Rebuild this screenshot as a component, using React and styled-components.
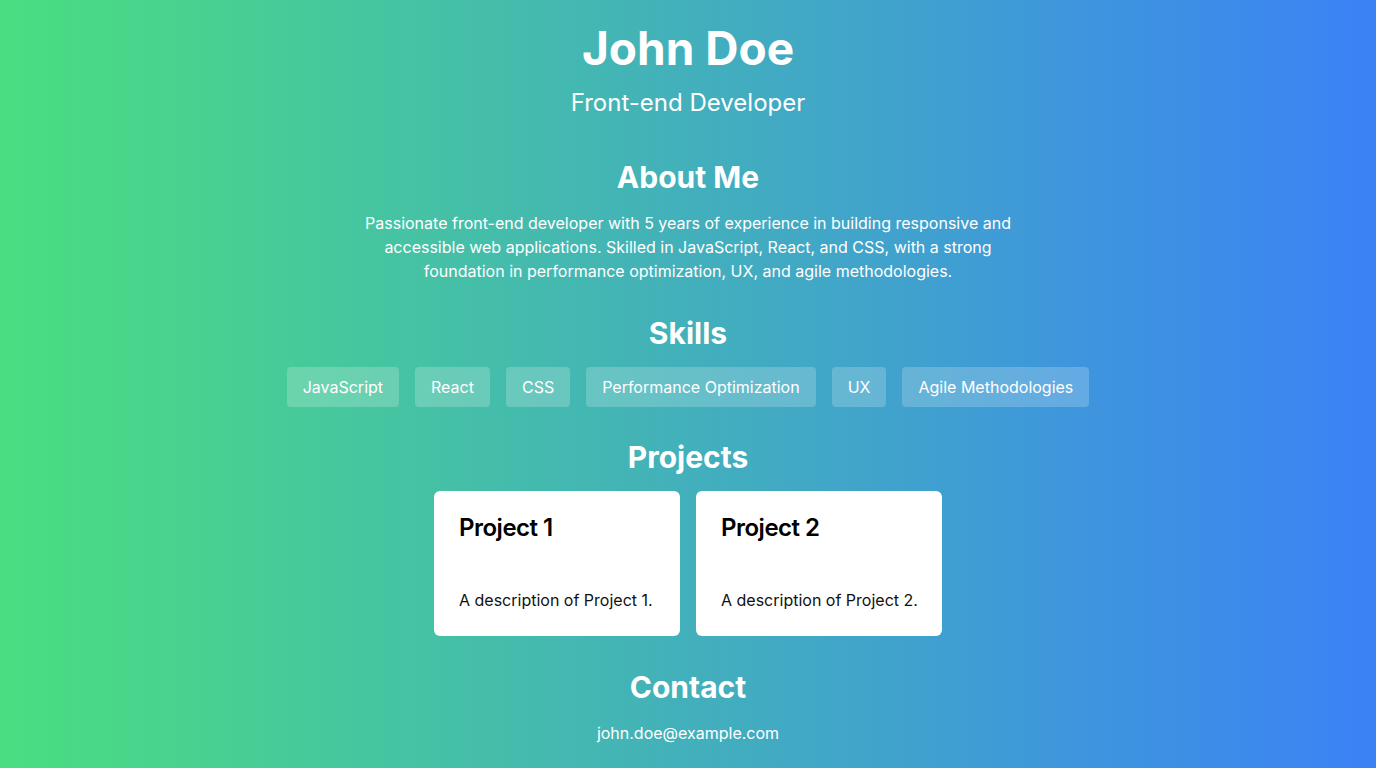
import React from 'react';
import styled, { createGlobalStyle } from 'styled-components';

const GlobalStyle = createGlobalStyle`
  * { box-sizing: border-box; }
  html, body { margin: 0; padding: 0; }
  body {
    font-family: Inter, "Noto Sans", sans-serif;
    background: linear-gradient(to right, #4ade80, #3b82f6);
    min-height: 100vh;
  }
`;

const Page = styled.div`
  min-height: 100vh;
  background: linear-gradient(to right, #4ade80, #3b82f6);
  color: #fff;
  display: flex;
  flex-direction: column;
  align-items: center;
  padding: 20px 32px 24px;
  text-align: center;
`;

const Name = styled.h1`
  margin: 0;
  font-size: 46px;
  line-height: 56px;
  font-weight: 700;
`;

const Role = styled.p`
  margin: 11px 0 0;
  font-size: 24px;
  line-height: 32px;
  font-weight: 400;
`;

const Section = styled.section`
  margin-top: ${p => p.$gap || 32}px;
  display: flex;
  flex-direction: column;
  align-items: center;
`;

const Heading = styled.h2`
  margin: 0 0 16px;
  font-size: 30px;
  line-height: 36px;
  font-weight: 700;
`;

const About = styled.p`
  margin: 0;
  max-width: 672px;
  font-size: 16px;
  line-height: 24px;
`;

const Tags = styled.div`
  display: flex;
  gap: 16px;
  justify-content: center;
`;

const Tag = styled.span`
  height: 40px;
  padding: 0 16px;
  display: inline-flex;
  align-items: center;
  background: rgba(255, 255, 255, 0.2);
  border-radius: 4px;
  font-size: 16px;
`;

const Cards = styled.div`
  display: flex;
  gap: 16px;
`;

const Card = styled.div`
  width: 246px;
  height: 145px;
  background: #fff;
  color: #000;
  border-radius: 6px;
  padding: 21px 24px 24px 25px;
  text-align: left;
`;

const CardTitle = styled.h3`
  margin: 0 0 44px;
  font-size: 24px;
  line-height: 32px;
  font-weight: 600;
  letter-spacing: -0.5px;
`;

const CardText = styled.p`
  margin: 0;
  font-size: 16px;
  line-height: 24px;
  color: #111;
`;

const Email = styled.a`
  color: #fff;
  text-decoration: none;
  font-size: 16px;
  line-height: 24px;
`;

const skills = ['JavaScript', 'React', 'CSS', 'Performance Optimization', 'UX', 'Agile Methodologies'];

export default function App() {
  return (
    <>
      <GlobalStyle />
      <Page>
        <Name>John Doe</Name>
        <Role>Front-end Developer</Role>

        <Section $gap={40}>
          <Heading>About Me</Heading>
          <About>
            Passionate front-end developer with 5 years of experience in building responsive and
            accessible web applications. Skilled in JavaScript, React, and CSS, with a strong
            foundation in performance optimization, UX, and agile methodologies.
          </About>
        </Section>

        <Section>
          <Heading>Skills</Heading>
          <Tags>
            {skills.map(s => <Tag key={s}>{s}</Tag>)}
          </Tags>
        </Section>

        <Section>
          <Heading>Projects</Heading>
          <Cards>
            <Card>
              <CardTitle>Project 1</CardTitle>
              <CardText>A description of Project 1.</CardText>
            </Card>
            <Card>
              <CardTitle>Project 2</CardTitle>
              <CardText>A description of Project 2.</CardText>
            </Card>
          </Cards>
        </Section>

        <Section $gap={33}>
          <Heading>Contact</Heading>
          <Email href="mailto:john.doe@example.com">john.doe@example.com</Email>
        </Section>
      </Page>
    </>
  );
}
